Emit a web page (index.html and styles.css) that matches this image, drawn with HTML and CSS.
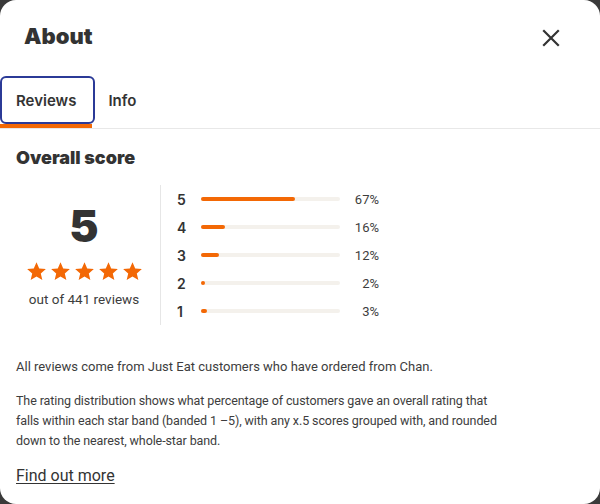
FILE: index.html
```html
<!DOCTYPE html>
<html lang="en">
<head>
<meta charset="utf-8">
<title>About</title>
<link rel="stylesheet" href="styles.css">
</head>
<body>
<div class="modal">
  <div class="header">
    <h1 class="title">About</h1>
    <button class="close" aria-label="Close">
      <svg width="18" height="18" viewBox="0 0 18 18"><path d="M2 2 L16 16 M16 2 L2 16" stroke="#333" stroke-width="2.2" stroke-linecap="square" fill="none"/></svg>
    </button>
  </div>
  <div class="tabs">
    <div class="tab active"><span class="tab-label">Reviews</span></div>
    <div class="tab"><span class="tab-label">Info</span></div>
  </div>
  <div class="content">
    <h2 class="subtitle">Overall score</h2>
    <div class="score">
      <div class="summary">
        <div class="big">5</div>
        <div class="stars">
          <svg class="star" viewBox="0 0 24 24"><path d="M12 1.5l3.1 7 7.6.7-5.8 5 1.8 7.5L12 17.8l-6.7 3.9 1.8-7.5-5.8-5 7.6-.7z"/></svg>
          <svg class="star" viewBox="0 0 24 24"><path d="M12 1.5l3.1 7 7.6.7-5.8 5 1.8 7.5L12 17.8l-6.7 3.9 1.8-7.5-5.8-5 7.6-.7z"/></svg>
          <svg class="star" viewBox="0 0 24 24"><path d="M12 1.5l3.1 7 7.6.7-5.8 5 1.8 7.5L12 17.8l-6.7 3.9 1.8-7.5-5.8-5 7.6-.7z"/></svg>
          <svg class="star" viewBox="0 0 24 24"><path d="M12 1.5l3.1 7 7.6.7-5.8 5 1.8 7.5L12 17.8l-6.7 3.9 1.8-7.5-5.8-5 7.6-.7z"/></svg>
          <svg class="star" viewBox="0 0 24 24"><path d="M12 1.5l3.1 7 7.6.7-5.8 5 1.8 7.5L12 17.8l-6.7 3.9 1.8-7.5-5.8-5 7.6-.7z"/></svg>
        </div>
        <div class="count">out of 441 reviews</div>
      </div>
      <div class="dist">
        <div class="row"><span class="lbl">5</span><span class="track"><span class="fill" style="width:67.6%"></span></span><span class="pct">67%</span></div>
        <div class="row"><span class="lbl">4</span><span class="track"><span class="fill" style="width:17%"></span></span><span class="pct">16%</span></div>
        <div class="row"><span class="lbl">3</span><span class="track"><span class="fill" style="width:13%"></span></span><span class="pct">12%</span></div>
        <div class="row"><span class="lbl">2</span><span class="track"><span class="fill" style="width:3%"></span></span><span class="pct">2%</span></div>
        <div class="row"><span class="lbl">1</span><span class="track"><span class="fill" style="width:4%"></span></span><span class="pct">3%</span></div>
      </div>
    </div>
    <p class="note first">All reviews come from Just Eat customers who have ordered from Chan.</p>
    <p class="note">The rating distribution shows what percentage of customers gave an overall rating that falls within each star band (banded 1 –5), with any x.5 scores grouped with, and rounded down to the nearest, whole-star band.</p>
    <a class="more" href="#">Find out more</a>
  </div>
</div>
</body>
</html>
```
FILE: styles.css
```css
html, body {
  margin: 0;
  padding: 0;
}
body {
  width: 600px;
  height: 504px;
  overflow: hidden;
  background: #3a3a3a;
  font-family: "Roboto", "Liberation Sans", sans-serif;
  color: #3d3d3d;
}
.modal {
  background: #fff;
  height: 504px;
  border-radius: 16px;
  overflow: hidden;
}
.header {
  height: 76px;
  display: flex;
  align-items: center;
  justify-content: space-between;
  padding: 0 33px 0 24px;
}
.title {
  margin: 0;
  font-family: "Inter", sans-serif;
  font-size: 22px;
  font-weight: 900;
  color: #333;
  line-height: 28px;
  position: relative;
  top: -2px;
}
.close {
  width: 32px;
  height: 32px;
  padding: 0;
  border: 0;
  background: none;
  display: flex;
  align-items: center;
  justify-content: center;
}
.tabs {
  display: flex;
  border-bottom: 1px solid #e8e8e8;
}
.tab {
  position: relative;
  height: 48px;
  padding: 0 16px;
  display: flex;
  align-items: center;
  border-bottom: 4px solid transparent;
  font-family: "Inter", sans-serif;
  font-size: 15px;
  font-weight: 600;
  color: #333;
}
.tab.active {
  border-bottom-color: #f36805;
}
.tab.active::after {
  content: "";
  position: absolute;
  left: 0;
  top: 0;
  right: -3px;
  bottom: 0;
  border: 2px solid #2b3a97;
  border-radius: 6px;
}
.content {
  padding: 0 16px;
}
.subtitle {
  margin: 17px 0 0;
  font-family: "Inter", sans-serif;
  font-size: 18px;
  line-height: 24px;
  font-weight: 900;
  color: #333;
}
.score {
  display: flex;
  margin-top: 15px;
}
.summary {
  width: 136px;
  display: flex;
  flex-direction: column;
  align-items: center;
  justify-content: center;
  margin-right: 8px;
}
.big {
  font-family: "Inter", sans-serif;
  font-size: 44px;
  line-height: 46px;
  font-weight: 900;
  color: #333;
}
.stars {
  display: flex;
  gap: 3px;
  margin-top: 12px;
}
.star {
  width: 21px;
  height: 21px;
  fill: #f36805;
}
.count {
  margin-top: 8px;
  font-size: 13.5px;
  line-height: 18px;
  color: #3d3d3d;
}
.dist {
  border-left: 1px solid #e6e6e6;
  padding-left: 16px;
}
.row {
  height: 28px;
  display: flex;
  align-items: center;
}
.lbl {
  width: 24px;
  font-family: "Inter", sans-serif;
  font-size: 14px;
  font-weight: 600;
  color: #333;
}
.track {
  width: 139px;
  height: 4px;
  border-radius: 2px;
  background: #f4f1ec;
  display: flex;
}
.fill {
  height: 4px;
  border-radius: 2px;
  background: #f36805;
}
.pct {
  width: 39px;
  text-align: right;
  font-size: 13px;
  color: #3d3d3d;
}
.note {
  margin: 14px 0 0;
  max-width: 486px;
  font-size: 12.5px;
  letter-spacing: -0.1px;
  line-height: 20px;
}
.note.first {
  margin-top: 32px;
  font-size: 13px;
  letter-spacing: 0;
}
.more {
  display: inline-block;
  margin-top: 15px;
  font-size: 16px;
  line-height: 20px;
  color: #333;
  text-decoration: underline;
  text-underline-offset: 2px;
}
```
